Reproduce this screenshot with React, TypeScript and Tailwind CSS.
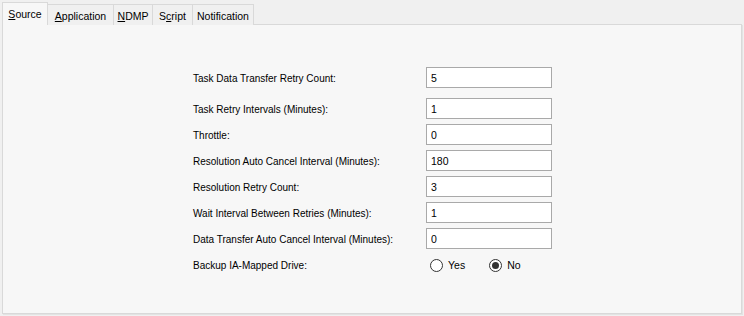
import { useState } from "react";

interface Field {
  label: string;
  value: string;
}

const fields: Field[] = [
  { label: "Task Data Transfer Retry Count:", value: "5" },
  { label: "Task Retry Intervals (Minutes):", value: "1" },
  { label: "Throttle:", value: "0" },
  { label: "Resolution Auto Cancel Interval (Minutes):", value: "180" },
  { label: "Resolution Retry Count:", value: "3" },
  { label: "Wait Interval Between Retries (Minutes):", value: "1" },
  { label: "Data Transfer Auto Cancel Interval (Minutes):", value: "0" },
];

const tabs = [
  { pre: "", key: "S", post: "ource", w: "w-[46px]" },
  { pre: "", key: "A", post: "pplication", w: "w-[66px]" },
  { pre: "", key: "N", post: "DMP", w: "w-[39px]" },
  { pre: "S", key: "c", post: "ript", w: "w-[40px]" },
  { pre: "Notification", key: "", post: "", w: "w-[61px]" },
];

function Radio({ checked, label, onClick }: { checked: boolean; label: string; onClick: () => void }) {
  return (
    <button onClick={onClick} className="flex items-center gap-[5px] cursor-default">
      <span className="w-[13px] h-[13px] rounded-full border border-[#333] bg-white flex items-center justify-center">
        {checked && <span className="w-[7px] h-[7px] rounded-full bg-[#333]" />}
      </span>
      <span className="text-[10.5px]">{label}</span>
    </button>
  );
}

export default function App() {
  const [active, setActive] = useState(0);
  const [values, setValues] = useState(fields.map((f) => f.value));
  const [mapped, setMapped] = useState(false);

  return (
    <div
      className="w-[744px] h-[316px] bg-[#f0f0f0] text-[10px] text-black flex flex-col px-[2px] pt-[2px] pb-[2px]"
      style={{ fontFamily: '"Liberation Sans", Arial, sans-serif' }}
    >
      {/* Tabs */}
      <div className="flex items-end h-[23px] relative z-10 text-[10.5px]">
        {tabs.map((t, i) => (
          <button
            key={i}
            onClick={() => setActive(i)}
            className={
              i === active
                ? `${t.w} h-[23px] bg-[#f7f7f7] border border-b-0 border-[#d9d9d9] flex items-start justify-center pt-[4px] cursor-default`
                : `${t.w} h-[21px] bg-[#f0f0f0] border border-b-0 border-l-0 border-[#d9d9d9] flex items-start justify-center pt-[4px] cursor-default`
            }
          >
            {t.pre}
            {t.key && <span className="underline">{t.key}</span>}
            {t.post}
          </button>
        ))}
      </div>

      {/* Panel */}
      <div className="flex-1 -mt-px bg-[#f7f7f7] border border-[#d9d9d9] shadow-[1px_1px_0_#e3e3e3] pl-[190px] pt-[42px]">
        <div className="flex flex-col">
          {fields.map((f, i) => (
            <div key={f.label} className={`flex items-center h-[21px] ${i === 0 ? "mb-[10px]" : "mb-[5px]"}`}>
              <label className="w-[233px] pt-[2px]">{f.label}</label>
              <input
                value={values[i]}
                onChange={(e) => setValues((prev) => prev.map((v, j) => (j === i ? e.target.value : v)))}
                className="w-[126px] h-[21px] bg-white border border-[#a9a9a9] px-[4px] pt-[1px] outline-none text-[10.5px]"
              />
            </div>
          ))}
          <div className="flex items-center h-[21px] mt-[1px]">
            <span className="w-[237px]">Backup IA-Mapped Drive:</span>
            <div className="flex items-center gap-[24px]">
              <Radio checked={mapped} label="Yes" onClick={() => setMapped(true)} />
              <Radio checked={!mapped} label="No" onClick={() => setMapped(false)} />
            </div>
          </div>
        </div>
      </div>
    </div>
  );
}
